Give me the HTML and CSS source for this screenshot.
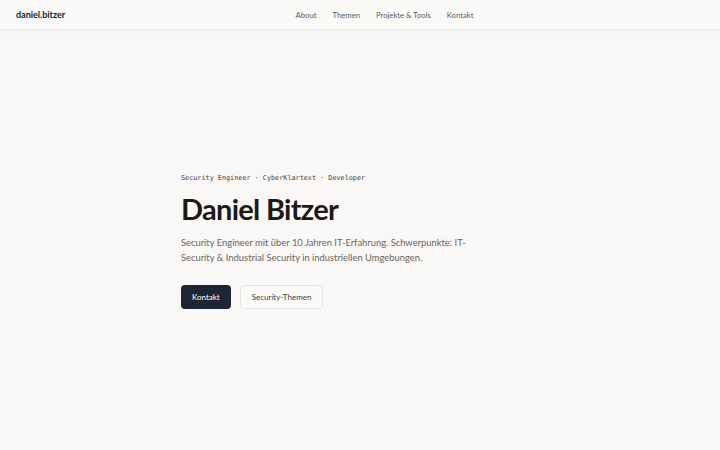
FILE: index.html
```html
<!DOCTYPE html>
<html lang="de">
<head>
<meta charset="utf-8">
<title>daniel.bitzer</title>
<link rel="stylesheet" href="styles.css">
</head>
<body>
<header class="site-header">
  <a class="logo" href="#">daniel.bitzer</a>
  <nav class="nav">
    <a href="#">About</a>
    <a href="#">Themen</a>
    <a href="#">Projekte &amp; Tools</a>
    <a href="#">Kontakt</a>
  </nav>
  <div class="spacer"></div>
</header>
<main class="hero">
  <div class="hero-inner">
    <p class="eyebrow">Security Engineer · CyberKlartext · Developer</p>
    <h1 class="title">Daniel Bitzer</h1>
    <p class="lead">Security Engineer mit über 10 Jahren IT-Erfahrung. Schwerpunkte: IT-Security &amp; Industrial Security in industriellen Umgebungen.</p>
    <div class="actions">
      <a class="btn btn-primary" href="#">Kontakt</a>
      <a class="btn btn-secondary" href="#">Security-Themen</a>
    </div>
  </div>
</main>
</body>
</html>
```
FILE: styles.css
```css
* { box-sizing: border-box; }
html, body { margin: 0; padding: 0; }
body {
  background: #f9f8f6;
  font-family: Lato, "Noto Sans", sans-serif;
  color: #1c1917;
  height: 450px;
  display: flex;
  flex-direction: column;
}
a { text-decoration: none; color: inherit; }

.site-header {
  height: 30px;
  flex: 0 0 30px;
  display: flex;
  align-items: center;
  padding: 0 16px;
  background: #fafaf9;
  border-bottom: 1px solid #eeedea;
  box-shadow: 0 1px 4px rgba(0,0,0,0.05);
}
.logo {
  font-size: 9px;
  font-weight: 700;
  color: #1c1917;
  flex: 1 1 0;
}
.nav {
  display: flex;
  gap: 16px;
  margin-left: 49px;
  font-size: 7.7px;
  color: #5f5a55;
}
.spacer { flex: 1 1 0; }

.hero {
  flex: 1;
  display: flex;
  align-items: center;
  justify-content: center;
}
.hero-inner {
  width: 358px;
  margin-top: 2px;
}
.eyebrow {
  margin: 0;
  font-family: "DejaVu Sans Mono", "Liberation Mono", monospace;
  font-size: 6.8px;
  line-height: 10px;
  color: #44403c;
}
.title {
  margin: 9px 0 0;
  font-size: 29px;
  font-weight: 700;
  letter-spacing: -0.7px;
  line-height: 34px;
  color: #1c1917;
}
.lead {
  margin: 9px 0 0;
  max-width: 292px;
  font-size: 9.4px;
  line-height: 15px;
  color: #6b6560;
}
.actions {
  display: flex;
  gap: 9px;
  margin-top: 20px;
}
.btn {
  display: inline-flex;
  align-items: center;
  justify-content: center;
  height: 24px;
  padding: 0 11px;
  border-radius: 4px;
  font-size: 8px;
}
.btn-primary {
  background: #1e2636;
  color: #ffffff;
}
.btn-secondary {
  background: #fafaf9;
  border: 1px solid #e5e3df;
  color: #44403c;
}
```
